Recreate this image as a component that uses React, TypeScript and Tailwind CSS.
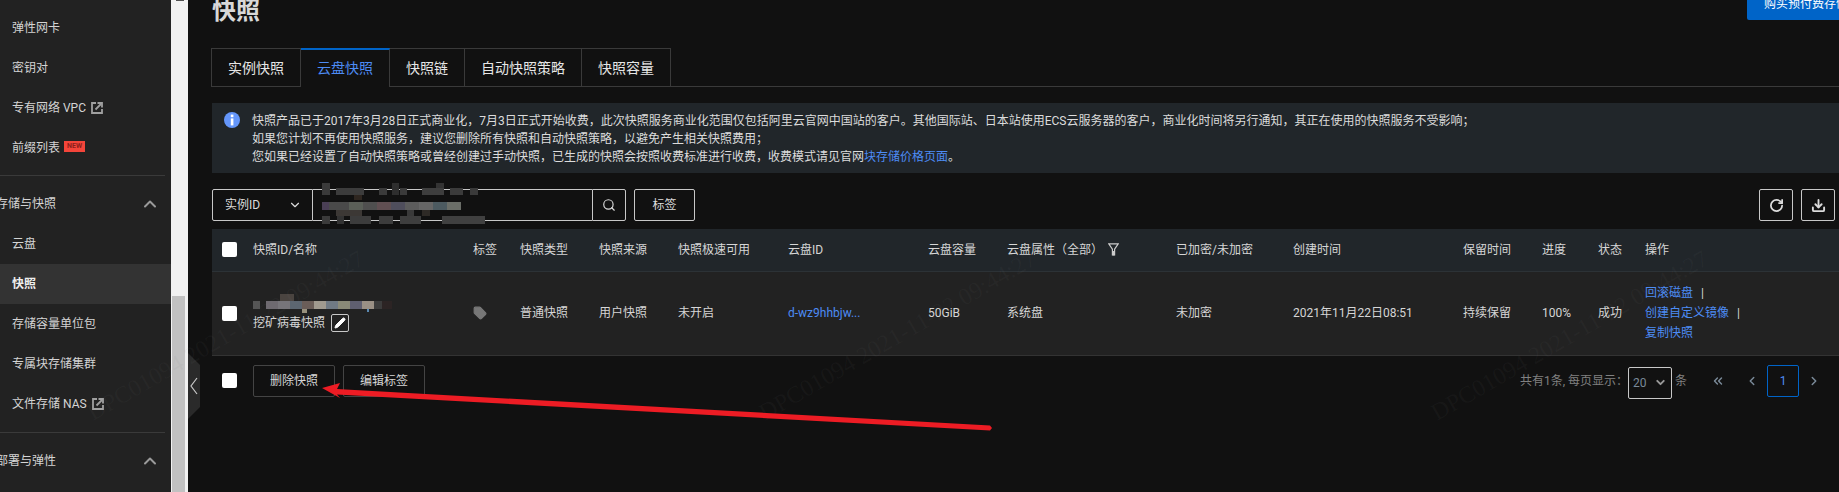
import { Download, Pencil, RotateCw, Search, ChevronDown, ChevronUp, ChevronsLeft, ChevronLeft, ChevronRight, Tag } from "lucide-react";
import { ReactNode } from "react";

const cell = "p-0 text-left font-normal align-middle";

function Mosaic({ blocks, width, height }: { blocks: [number, number, number, number, string][]; width: number; height: number }) {
  return (
    <svg width={width} height={height} className="block">
      {blocks.map(([x, y, w, h, c], i) => (
        <rect key={i} x={x} y={y} width={w} height={h} fill={c} />
      ))}
    </svg>
  );
}

const inputBlur: [number, number, number, number, string][] = [
  [0, 0, 8, 12, "#3a3a3a"], [14, 5, 28, 7, "#3c3c3c"], [32, 12, 8, 5, "#2e2620"], [57, 5, 8, 7, "#3a3a3a"], [70, 0, 7, 12, "#2e2e2e"],
  [78, 5, 7, 7, "#3a3a3a"], [100, 5, 22, 7, "#3e3e3e"], [114, 0, 8, 5, "#333"], [128, 5, 13, 7, "#3b3b3b"], [148, 5, 8, 7, "#3a3a3a"],
  [0, 19, 7, 8, "#4a3f55"], [7, 19, 20, 8, "#4a4a4a"], [27, 19, 14, 8, "#5a5f58"], [41, 19, 14, 8, "#4f4f4f"], [55, 19, 14, 8, "#604f52"],
  [69, 19, 14, 8, "#4f4e5c"], [83, 19, 14, 8, "#5c5c5c"], [97, 19, 14, 8, "#666"], [111, 19, 14, 8, "#4c5a60"], [125, 19, 14, 8, "#6b6e68"],
  [14, 27, 26, 6, "#3c3835"], [85, 27, 7, 6, "#3a3a3a"], [100, 27, 8, 6, "#2e2a26"],
  [0, 33, 8, 8, "#3a3a3a"], [15, 33, 7, 8, "#333"], [28, 33, 21, 8, "#3c3c3c"], [57, 33, 14, 8, "#3c3c3c"], [78, 33, 21, 8, "#3e3e3e"], [120, 33, 43, 8, "#404040"],
];

const rowBlur: [number, number, number, number, string][] = [
  [0, 7, 7, 8, "#555"], [13, 7, 12, 8, "#6e6a70"], [25, 7, 12, 8, "#77757a"], [27, 0, 14, 7, "#4a4440"], [37, 7, 12, 8, "#5c6670"],
  [49, 7, 12, 8, "#6a5d58"], [61, 7, 12, 8, "#a09a8f"], [73, 7, 12, 8, "#707a84"], [85, 7, 12, 8, "#8a8a78"], [97, 7, 12, 8, "#5f5f70"],
  [109, 7, 12, 8, "#9a9085"], [49, 15, 5, 4, "#99917e"], [121, 7, 8, 8, "#3c3c3c"], [129, 7, 10, 8, "#2c2424"], [114, 15, 2, 3, "#5a88b0"],
];

function ExternalIcon() {
  return (
    <svg width="12" height="12" viewBox="0 0 12 12" className="ml-[5px] shrink-0" fill="none" stroke="#a0a0a0" strokeWidth="1.8">
      <path d="M5 1 H1 V11 H11 V7" />
      <path d="M4.5 7.5 L10 2" />
      <path d="M6.5 1 H11 V5.5" />
    </svg>
  );
}

function SideItem({ children, active }: { children: ReactNode; active?: boolean }) {
  return (
    <div className={`flex h-10 items-center pl-3 text-xs ${active ? "bg-[#333333] font-bold text-[#eeeeee]" : "text-[#d4d4d4]"}`}>
      {children}
    </div>
  );
}

function SideHeader({ label }: { label: string }) {
  return (
    <div className="flex h-12 items-center justify-between pr-[11px] pt-2 text-xs text-[#d4d4d4]">
      <span className="-ml-[4px]">{label}</span>
      <ChevronUp size={20} strokeWidth={2.4} className="text-[#9a9a9a]" />
    </div>
  );
}

function Tab({ label, active }: { label: string; active?: boolean }) {
  return (
    <div
      className={`flex items-center justify-center border-r border-[#3a3a3a] px-4 text-sm ${
        active
          ? "relative -mb-px h-[39px] border-t-2 border-t-[#0064c8] bg-[#111111] pb-[2px] text-[#4d8cf5]"
          : "h-[38px] border-t border-t-[#3a3a3a] text-[#e6e6e6]"
      }`}
    >
      {label}
    </div>
  );
}

function Checkbox() {
  return <span className="block h-[15px] w-[15px] rounded-[2px] bg-white" />;
}

const headers = ["快照ID/名称", "标签", "快照类型", "快照来源", "快照极速可用", "云盘ID", "云盘容量"];

export default function App() {
  return (
    <div
      className="relative flex h-[492px] w-[1839px] overflow-hidden bg-[#111111] text-xs text-[#d6d6d6]"
      style={{ fontFamily: '"Roboto", "Noto Sans CJK SC", sans-serif' }}
    >
      {/* sidebar */}
      <div className="w-[171px] shrink-0 bg-[#222222] pt-2">
        <SideItem>弹性网卡</SideItem>
        <SideItem>密钥对</SideItem>
        <SideItem>
          专有网络 VPC
          <ExternalIcon />
        </SideItem>
        <SideItem>
          前缀列表
          <span className="ml-1 -mt-[3px] flex h-[11px] w-[21px] items-center justify-center bg-[#f4453a] text-[7px] font-bold leading-none text-[#8c1f1a]">
            NEW
          </span>
        </SideItem>
        <div className="mr-[6px] mt-[7px] border-t border-[#3a3a3a]" />
        <SideHeader label="存储与快照" />
        <SideItem>云盘</SideItem>
        <SideItem active>快照</SideItem>
        <SideItem>存储容量单位包</SideItem>
        <SideItem>专属块存储集群</SideItem>
        <SideItem>
          文件存储 NAS
          <ExternalIcon />
        </SideItem>
        <div className="mr-[6px] mt-2 border-t border-[#3a3a3a]" />
        <SideHeader label="部署与弹性" />
      </div>

      {/* page scrollbar */}
      <div className="flex w-[17px] shrink-0 flex-col items-center bg-[#f1f1f1]">
        <div className="h-[1px] w-2 bg-[#505050]" />
        <div className="ml-[-2px] mt-[295px] h-[196px] w-[13px] bg-[#c1c1c1]" />
      </div>

      {/* main */}
      <div className="flex min-w-0 flex-1 flex-col pl-6">
        <div className="-mt-2 flex h-8 items-start justify-between">
          <h1 className="mt-[3px] text-2xl font-bold leading-8 text-[#d8d8d8]">快照</h1>
          <div className="-mr-[30px] -mt-[4px] flex h-8 w-[122px] items-center overflow-hidden whitespace-nowrap rounded-[2px] bg-[#0064c8] pl-[17px] text-xs text-white">
            购买预付费存储包
          </div>
        </div>

        <div className="-ml-px mt-6 flex border-b border-[#3a3a3a]">
          <div className="border-l border-[#3a3a3a]" />
          <Tab label="实例快照" />
          <Tab label="云盘快照" active />
          <Tab label="快照链" />
          <Tab label="自动快照策略" />
          <Tab label="快照容量" />
        </div>

        <div className="mt-4 flex h-[70px] bg-[#21262a] pl-3 pt-[9px] leading-[18px] text-[#dcdcdc]">
          <svg width="16" height="16" viewBox="0 0 16 16" className="shrink-0">
            <circle cx="8" cy="8" r="8" fill="#6496fa" />
            <rect x="6.8" y="2.6" width="2.6" height="2.6" fill="#fff" />
            <rect x="6.8" y="6.4" width="2.6" height="7" fill="#fff" />
          </svg>
          <div className="ml-3 whitespace-nowrap">
            <p>快照产品已于2017年3月28日正式商业化，7月3日正式开始收费，此次快照服务商业化范围仅包括阿里云官网中国站的客户。其他国际站、日本站使用ECS云服务器的客户，商业化时间将另行通知，其正在使用的快照服务不受影响；</p>
            <p>如果您计划不再使用快照服务，建议您删除所有快照和自动快照策略，以避免产生相关快照费用；</p>
            <p>
              您如果已经设置了自动快照策略或曾经创建过手动快照，已生成的快照会按照收费标准进行收费，收费模式请见官网
              <span className="text-[#4d8cf5]">块存储价格页面</span>。
            </p>
          </div>
        </div>

        <div className="mt-4 flex h-8 items-stretch text-[#dcdcdc]">
          <div className="flex w-[101px] items-center justify-between rounded-l-[2px] border border-[#c8c8c8] pl-3 pr-[10px]">
            实例ID
            <ChevronDown size={14} />
          </div>
          <div className="relative w-[279px] border-y border-[#c8c8c8]">
            <div className="absolute -top-[7px] left-[9px]">
              <Mosaic blocks={inputBlur} width={164} height={42} />
            </div>
          </div>
          <div className="flex w-[34px] items-center justify-center rounded-r-[2px] border border-[#c8c8c8]">
            <Search size={14} />
          </div>
          <div className="ml-2 flex w-[61px] items-center justify-center rounded-[2px] border border-[#c8c8c8]">标签</div>
          <div className="ml-auto mr-1 flex gap-2">
            <div className="flex w-[34px] items-center justify-center rounded-[2px] border border-[#c8c8c8]">
              <RotateCw size={15} strokeWidth={2.8} />
            </div>
            <div className="flex w-[34px] items-center justify-center rounded-[2px] border border-[#c8c8c8]">
              <Download size={15} strokeWidth={3} />
            </div>
          </div>
        </div>

        <table className="mt-2 w-[1627px] table-fixed border-collapse">
          <colgroup>
            <col className="w-[41px]" />
            <col className="w-[220px]" />
            <col className="w-[47px]" />
            <col className="w-[79px]" />
            <col className="w-[79px]" />
            <col className="w-[110px]" />
            <col className="w-[140px]" />
            <col className="w-[79px]" />
            <col className="w-[169px]" />
            <col className="w-[117px]" />
            <col className="w-[170px]" />
            <col className="w-[79px]" />
            <col className="w-[56px]" />
            <col className="w-[47px]" />
            <col className="w-[194px]" />
          </colgroup>
          <thead>
            <tr className="h-[42px] border-b border-[#2c3236] bg-[#21262a]">
              <th className={`${cell} pl-[10px]`}>
                <Checkbox />
              </th>
              {headers.map((h) => (
                <th key={h} className={cell}>
                  {h}
                </th>
              ))}
              <th className={cell}>
                <span className="flex items-center gap-[5px]">
                  云盘属性（全部）
                  <svg width="11" height="13" viewBox="0 0 11 13" fill="none" stroke="#cccccc" strokeWidth="1.2">
                    <path d="M0.8 0.8 H10.2 L6.6 6.2 V12 H4.4 V6.2 Z" />
                    <rect x="4.4" y="8" width="2.2" height="4.4" fill="#cccccc" stroke="none" />
                  </svg>
                </span>
              </th>
              <th className={cell}>已加密/未加密</th>
              <th className={cell}>创建时间</th>
              <th className={cell}>保留时间</th>
              <th className={cell}>进度</th>
              <th className={cell}>状态</th>
              <th className={cell}>操作</th>
            </tr>
          </thead>
          <tbody>
            <tr className="h-[84px] border-b border-[#333333] bg-[#222222]">
              <td className={`${cell} pl-[10px]`}>
                <Checkbox />
              </td>
              <td className={cell}>
                <Mosaic blocks={rowBlur} width={140} height={20} />
                <div className="flex h-[18px] items-center gap-[6px]">
                  挖矿病毒快照
                  <span className="flex h-[18px] w-[18px] items-center justify-center rounded-[2px] border border-[#c8c8c8]">
                    <Pencil size={12} fill="#ffffff" className="text-white" />
                  </span>
                </div>
              </td>
              <td className={cell}>
                <Tag size={14} fill="#777777" className="text-[#777777]" />
              </td>
              <td className={cell}>普通快照</td>
              <td className={cell}>用户快照</td>
              <td className={cell}>未开启</td>
              <td className={`${cell} text-[#4d8cf5]`}>d-wz9hhbjw...</td>
              <td className={cell}>50GiB</td>
              <td className={cell}>系统盘</td>
              <td className={cell}>未加密</td>
              <td className={cell}>2021年11月22日08:51</td>
              <td className={cell}>持续保留</td>
              <td className={cell}>100%</td>
              <td className={cell}>成功</td>
              <td className={`${cell} leading-5 text-[#4d8cf5]`}>
                <div>
                  回滚磁盘<span className="ml-2 text-[#d6d6d6]">|</span>
                </div>
                <div>
                  创建自定义镜像<span className="ml-2 text-[#d6d6d6]">|</span>
                </div>
                <div>复制快照</div>
              </td>
            </tr>
          </tbody>
        </table>

        <div className="mt-[9px] flex h-8 items-center pl-[10px]">
          <Checkbox />
          <div className="ml-[16px] flex h-8 w-[82px] items-center justify-center rounded-[2px] border border-[#444444]">删除快照</div>
          <div className="ml-2 flex h-8 w-[82px] items-center justify-center rounded-[2px] border border-[#444444]">编辑标签</div>
          <div className="ml-auto flex items-center text-[#808080]">
            <span>共有1条, 每页显示：</span>
            <span className="mt-1 flex h-8 w-[44px] items-center justify-between rounded-[2px] border border-[#c8c8c8] pl-1 pr-1 text-[#7a8a99]">
              20
              <ChevronDown size={13} strokeWidth={3.5} className="text-[#999999]" />
            </span>
            <span className="ml-[3px]">条</span>
            <ChevronsLeft size={14} strokeWidth={2.5} className="ml-6 text-[#7a8a99]" />
            <ChevronLeft size={14} strokeWidth={2.5} className="ml-5 text-[#7a8a99]" />
            <span className="ml-2 flex h-8 w-8 items-center justify-center rounded-[2px] border border-[#0064c8] text-[#4d8cf5]">1</span>
            <ChevronRight size={14} strokeWidth={2.5} className="ml-2 mr-[18px] text-[#7a8a99]" />
          </div>
        </div>
      </div>

      {/* collapse handle */}
      <div className="absolute left-[188px] top-[353px]">
        <svg width="12" height="66" viewBox="0 0 12 66" className="block">
          <path d="M0 0 L12 12 L12 54 L0 66 Z" fill="#2a2a2a" />
          <path d="M9 25 L3 33 L9 41" stroke="#c8c8c8" strokeWidth="1.2" fill="none" />
        </svg>
      </div>

      {/* watermark */}
      <span className="pointer-events-none absolute left-[97px] top-[396px] origin-bottom-left -rotate-[30deg] whitespace-nowrap text-2xl text-[#80808012]" style={{ fontFamily: '"Liberation Serif", serif' }}>
        DPC01094 2021-11-22 09:44:27
      </span>
      <span className="pointer-events-none absolute left-[769px] top-[396px] origin-bottom-left -rotate-[30deg] whitespace-nowrap text-2xl text-[#80808012]" style={{ fontFamily: '"Liberation Serif", serif' }}>
        DPC01094 2021-11-22 09:44:27
      </span>
      <span className="pointer-events-none absolute left-[1441px] top-[396px] origin-bottom-left -rotate-[30deg] whitespace-nowrap text-2xl text-[#80808012]" style={{ fontFamily: '"Liberation Serif", serif' }}>
        DPC01094 2021-11-22 09:44:27
      </span>

      {/* red annotation arrow */}
      <svg width="1839" height="492" className="pointer-events-none absolute left-0 top-0">
        <polygon points="322,388 340,383 337,389 990,425.5 992,428 990,430.5 337,394.5 340,398" fill="#ed1c24" />
      </svg>
    </div>
  );
}
